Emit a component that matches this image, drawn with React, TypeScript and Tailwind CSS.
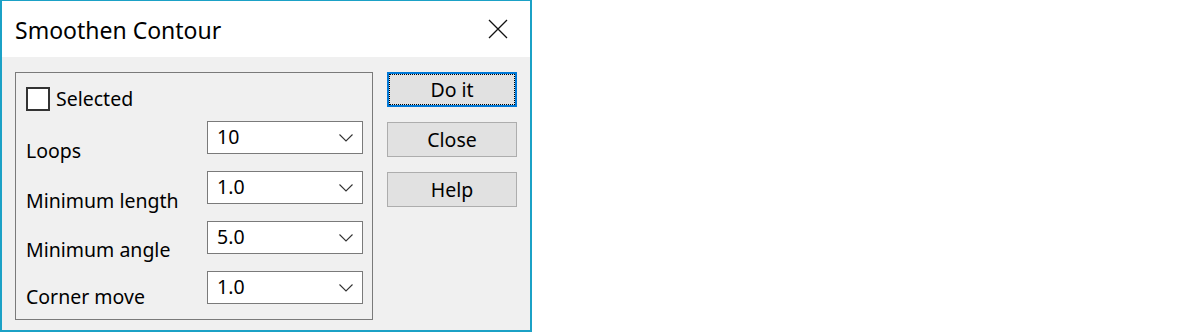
const font = "font-['Noto_Sans','Open_Sans',sans-serif]";

function Chevron() {
  return (
    <svg width="14" height="8" viewBox="0 0 14 8" className="shrink-0">
      <path d="M0.5 0.5 L7 7 L13.5 0.5" fill="none" stroke="#333" strokeWidth="1.1" />
    </svg>
  );
}

function Combo({ value }: { value: string }) {
  return (
    <div className="w-[156px] h-[33px] bg-white border border-[#7a7a7a] flex items-center justify-between pl-[9px] pr-[9px] text-[19.5px] text-black">
      <span className="leading-none -mt-[2px]">{value}</span>
      <Chevron />
    </div>
  );
}

function Field({ label, value, offset }: { label: string; value: string; offset: string }) {
  return (
    <div className="flex items-start justify-between h-[33px]">
      <span className={`text-[19.5px] leading-[24px] text-black ${offset}`}>{label}</span>
      <Combo value={value} />
    </div>
  );
}

function Button({ label, focused }: { label: string; focused?: boolean }) {
  if (focused) {
    return (
      <div className="w-[130px] h-[35px] bg-[#e1e1e1] border-2 border-[#0078d7]">
        <div className="h-full border border-dotted border-black flex items-center justify-center text-[19.5px] text-black">
          {label}
        </div>
      </div>
    );
  }
  return (
    <div className="w-[130px] h-[35px] bg-[#e1e1e1] border border-[#adadad] flex items-center justify-center text-[19.5px] text-black">
      {label}
    </div>
  );
}

export default function App() {
  const fields = [
    { label: 'Loops', value: '10', offset: 'mt-[18px]' },
    { label: 'Minimum length', value: '1.0', offset: 'mt-[18px]' },
    { label: 'Minimum angle', value: '5.0', offset: 'mt-[17px]' },
    { label: 'Corner move', value: '1.0', offset: 'mt-[14px]' },
  ];

  return (
    <div className={`w-[1200px] h-[332px] bg-white ${font}`}>
      <div className="w-[532px] h-[332px] border-t border-x-2 border-b-2 border-[#1ba1c6] flex flex-col">
        {/* title bar */}
        <div className="h-[56px] bg-white flex items-center justify-between pl-[13px] pr-[22px]">
          <span className="text-[23px] text-black mt-[2px]">Smoothen Contour</span>
          <svg width="20" height="20" viewBox="0 0 20 20">
            <path d="M1 1 L19 19 M19 1 L1 19" stroke="#111" strokeWidth="1.3" />
          </svg>
        </div>
        {/* body */}
        <div className="flex-1 bg-[#f0f0f0] flex items-start gap-[14px] pl-[13px] pt-[15px]">
          <div className="w-[358px] h-[248px] border border-[#7a7a7a] flex flex-col pl-[10px] pr-[9px] pt-[14px]">
            <div className="flex items-center gap-[6px] h-[24px]">
              <div className="w-[24px] h-[24px] bg-white border-2 border-[#333]" />
              <span className="text-[19.5px] text-black">Selected</span>
            </div>
            <div className="flex flex-col gap-[17px] mt-[10px]">
              {fields.map((f) => (
                <Field key={f.label} label={f.label} value={f.value} offset={f.offset} />
              ))}
            </div>
          </div>
          <div className="flex flex-col gap-[15px]">
            <Button label="Do it" focused />
            <Button label="Close" />
            <Button label="Help" />
          </div>
        </div>
      </div>
    </div>
  );
}
